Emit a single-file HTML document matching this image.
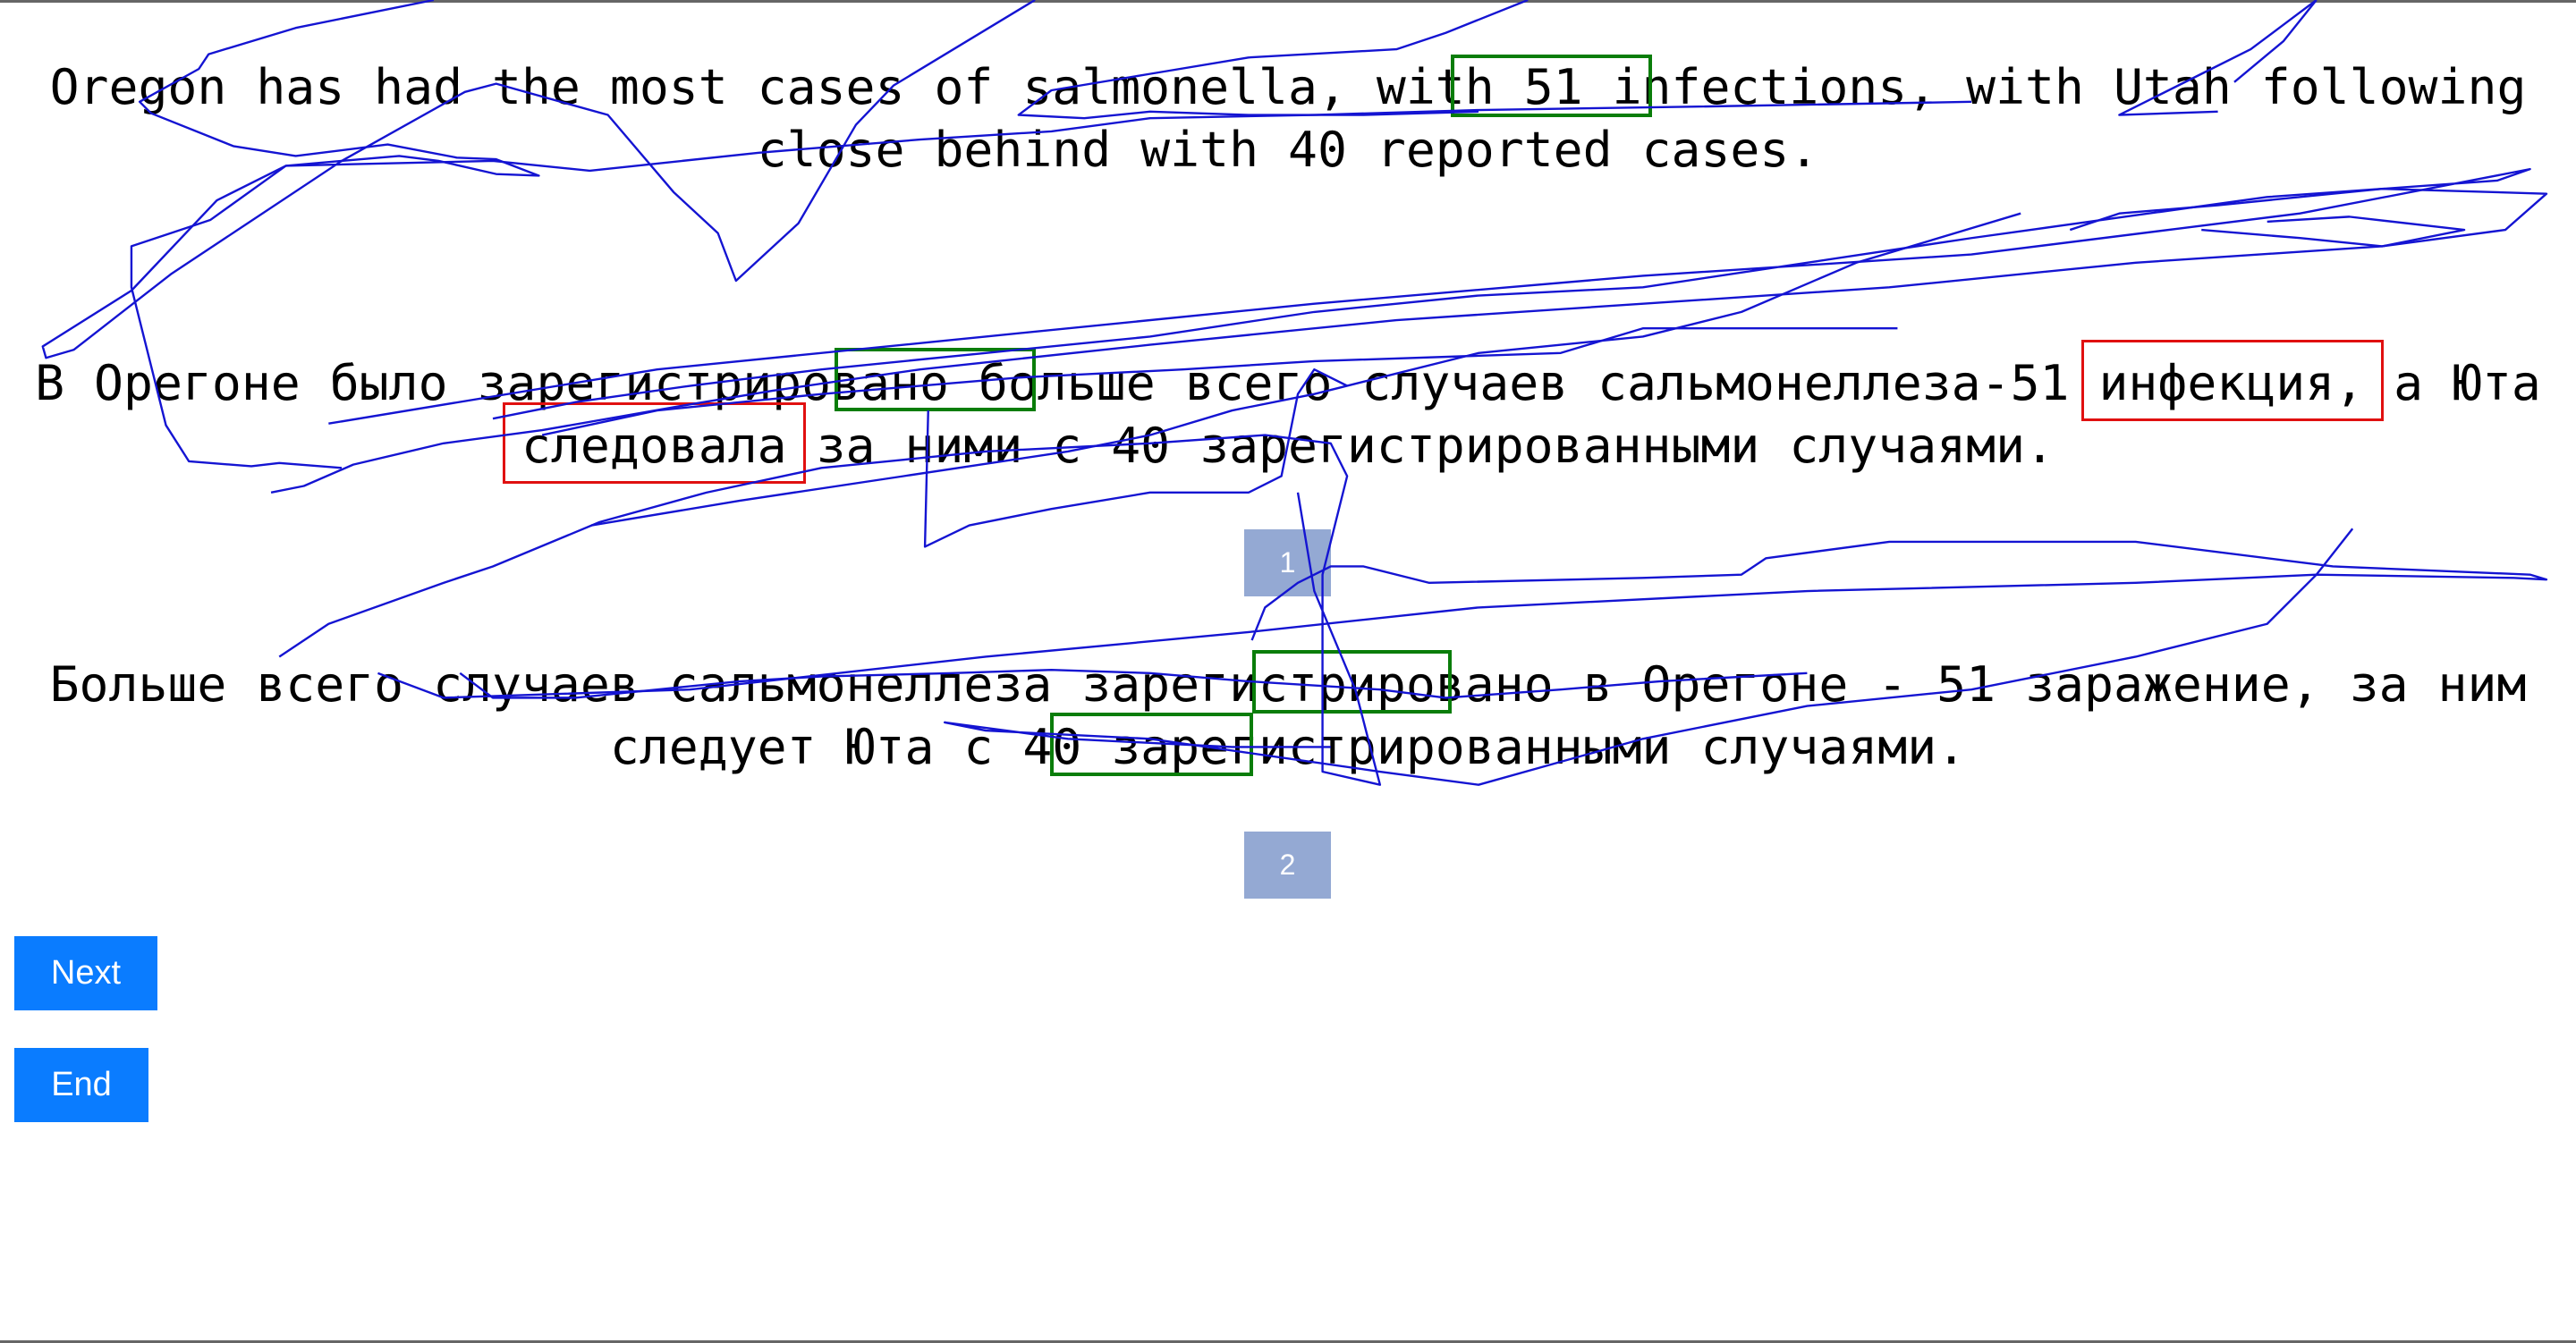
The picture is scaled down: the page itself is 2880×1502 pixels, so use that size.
<!DOCTYPE html>
<html><head><meta charset="utf-8">
<style>
html,body{margin:0;padding:0;background:#fff;}
body{width:2880px;height:1502px;position:relative;overflow:hidden;}
.topb{position:absolute;left:0;top:0;width:2880px;height:3px;background:#666;}
.botb{position:absolute;left:0;top:1499px;width:2880px;height:3px;background:#666;}
.ln{position:absolute;left:0;width:2880px;text-align:center;font-family:"DejaVu Sans Mono","Liberation Mono",monospace;font-size:54.75px;line-height:70px;height:70px;color:#000;white-space:pre;}
.num{position:absolute;left:1391px;width:97px;height:75px;background:#94a9d3;color:#fff;font-family:"Liberation Sans",sans-serif;font-size:32px;line-height:75px;text-align:center;}
.btn{position:absolute;left:16px;background:#0a7cff;color:#fff;font-family:"Liberation Sans",sans-serif;font-size:38px;text-align:center;height:83px;line-height:83px;}
.bx{position:absolute;box-sizing:border-box;}
.g{border:4px solid #0a7d0a;}
.r{border:3px solid #e01010;}
svg{position:absolute;left:0;top:0;}
</style></head><body>
<div class="topb"></div><div class="botb"></div>
<div class="ln" style="top:62px">Oregon has had the most cases of salmonella, with 51 infections, with Utah following</div>
<div class="ln" style="top:132px">close behind with 40 reported cases.</div>
<div class="ln" style="top:393px">В Орегоне было зарегистрировано больше всего случаев сальмонеллеза-51 инфекция, а Юта</div>
<div class="ln" style="top:463px">следовала за ними с 40 зарегистрированными случаями.</div>
<div class="num" style="top:592px">1</div>
<div class="ln" style="top:730px">Больше всего случаев сальмонеллеза зарегистрировано в Орегоне - 51 заражение, за ним</div>
<div class="ln" style="top:800px">следует Юта с 40 зарегистрированными случаями.</div>
<div class="num" style="top:930px">2</div>
<div class="btn" style="top:1047px;width:160px">Next</div>
<div class="btn" style="top:1172px;width:150px">End</div>

<div class="bx g" style="left:1622px;top:61px;width:225px;height:70px"></div>
<div class="bx g" style="left:933px;top:389px;width:225px;height:71px"></div>
<div class="bx r" style="left:2327px;top:380px;width:338px;height:91px"></div>
<div class="bx r" style="left:562px;top:450px;width:339px;height:91px"></div>
<div class="bx g" style="left:1400px;top:727px;width:223px;height:71px"></div>
<div class="bx g" style="left:1174px;top:797px;width:227px;height:71px"></div>

<svg width="2880" height="1502" viewBox="0 0 1568 818" preserveAspectRatio="none">
<g fill="none" stroke="#1414d2" stroke-width="1.3" stroke-linejoin="round">
<polyline points="264,0 180,17 127,33 121,42 85,62 92,69 142,89 180,95 236,88 278,96 302,97 328,107 302,106 267,98 243,95 208,98 174,101 128,134 80,150 80,175 101,259 115,281 153,284 170,282 208,285"/>
<polyline points="630,0 544,52 521,76 486,136 448,171 437,142 410,117 370,70 302,51 283,56 208,98 104,167 45,213 28,218 26,211 80,177 132,122 174,101 300,98 359,104 462,93 560,85 640,80 700,72 800,70 900,67 1030,65 1200,62"/>
<polyline points="930,0 880,20 850,30 760,35 700,45 640,55 620,70 660,72 700,68 760,70 830,70 900,68"/>
<polyline points="1410,0 1390,15 1370,30 1340,45 1310,60 1290,70 1350,68"/>
<polyline points="165,300 185,296 215,283 270,270 330,262 410,248 470,238 560,225 700,210 850,195 1000,185 1150,175 1300,160 1450,150 1525,140 1550,118 1450,115 1350,125 1290,130 1260,140"/>
<polyline points="200,258 400,225 600,205 800,185 1000,168 1200,155 1400,130 1540,103 1520,110 1380,120 1200,145 1100,160 1000,175 900,180 800,190 700,205 600,215 500,225 420,235 350,245 300,255"/>
<polyline points="1340,140 1400,145 1450,150 1500,140 1430,132 1380,135"/>
<polyline points="1410,0 1390,25 1360,50"/>
<polyline points="360,320 450,305 550,290 650,275 700,265 750,250 800,240 840,230 900,215 1000,205 1060,190 1130,160 1230,130"/>
<polyline points="330,265 400,250 500,240 620,230 720,225 800,220 950,215 1000,200 1100,200 1155,200"/>
<polyline points="565,250 563,333 590,320 640,310 700,300 760,300 780,290 790,240 800,225 820,235"/>
<polyline points="170,400 200,380 270,355 300,345 365,318 430,300 500,285 550,280 600,275 700,270 770,265 810,270 820,290 805,350 805,470 840,478 825,420 800,360 790,300"/>
<polyline points="762,390 770,370 790,355 810,345 830,345 870,355 1000,352 1060,350 1075,340 1150,330 1300,330 1420,345 1540,350 1550,353 1530,352 1410,350 1300,355 1100,360 900,370 760,385 600,400 420,420 270,425 230,410"/>
<polyline points="1432,322 1410,350 1380,380 1300,400 1200,420 1100,430 1000,450 900,478 840,470 700,450 600,445 575,440 650,450 750,455 810,455"/>
<polyline points="280,410 300,425 350,425 400,420 450,415 500,412 580,410 640,408 700,410 760,415 840,420 880,425 950,420 1010,415 1100,410"/>
</g></svg>
</body></html>
